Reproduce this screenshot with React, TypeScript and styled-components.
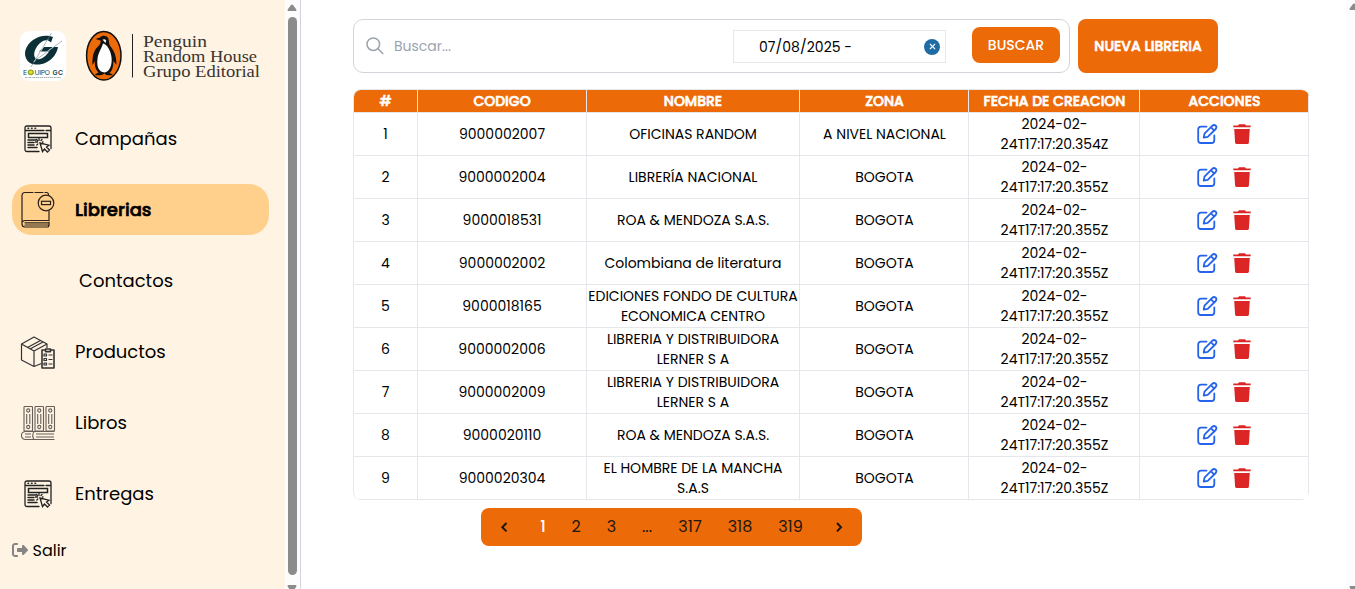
import React from "react";
import styled, { createGlobalStyle, css } from "styled-components";
import { FaRightFromBracket, FaXmark } from "react-icons/fa6";

const GlobalStyle = createGlobalStyle`
  * { box-sizing: border-box; }
  html, body { margin: 0; height: 100%; overflow: hidden; background: #fff; }
  body { font-family: Poppins, Inter, "Open Sans", sans-serif; color: #000; }
  #root { height: 100%; }
  button { font: inherit; border: 0; padding: 0; }
  svg { flex: none; }
`;

const heavy = css`font-weight: 500; -webkit-text-stroke: 0.65px currentColor;`;

const Page = styled.div`display: flex; width: 1355px; height: 589px; overflow: hidden;`;

const Sidebar = styled.aside`
  width: 285px; flex: none; background: #fff3e3; padding: 30px 16px 0 12px;
  display: flex; flex-direction: column;
`;
const Brand = styled.div`display: flex; align-items: flex-start; gap: 18px; height: 53px; padding-left: 7px;`;
const Menu = styled.nav`display: flex; flex-direction: column; gap: 20px; margin-top: 30px;`;
const MenuItem = styled.a<{ $active?: boolean }>`
  display: flex; align-items: center; height: 51px; border-radius: 20px; padding-left: 6px; font-size: 18px;
  ${p => p.$active && css`background: #ffd08c; ${heavy}`}
`;
const MenuIcon = styled.span`display: flex; width: 39px; justify-content: center; margin: 0 18px 0 0;`;
const SubItem = styled(MenuItem)`padding-left: 67px;`;
const Logout = styled.a`
  display: flex; align-items: center; gap: 4.5px; margin-top: 19px; height: 24px; font-size: 16px;
  svg { color: #858585; }
`;

const Scrollbar = styled.div`
  width: 15px; flex: none; background: #fcfcfc; display: flex; flex-direction: column; align-items: center;
  padding: 4px 1px 0 0; height: 589px; overflow: hidden;
`;
const Thumb = styled.div`width: 9px; height: 558px; margin: 5px 0 10px; flex: none; border-radius: 5px; background: #8b8b8b;`;
const Main = styled.main`flex: 1; border-left: 1px solid #d1d5db; padding: 19px 0 0 52px; min-width: 0;`;
const PageScroll = styled.div`
  width: 9px; flex: none; background: #fcfcfc; display: flex; flex-direction: column; justify-content: space-between;
  height: 594px; padding: 3px 0 0 3px; overflow: hidden;
`;

const Toolbar = styled.div`display: flex; gap: 8px; height: 54px;`;
const SearchBox = styled.div`
  display: flex; align-items: center; width: 717px; border: 1px solid #d1d5db; border-radius: 10px; padding: 0 9px 0 12px;
`;
const Placeholder = styled.span`flex: 1; margin-left: 8px; font-size: 14px; color: #9ca3af;`;
const DateField = styled.div`
  display: flex; align-items: center; justify-content: space-between; width: 213px; height: 33px; margin-right: 26px;
  border: 1px solid #e5e7eb; padding: 1px 5px 0 25px; font-size: 14px; line-height: 20px;
`;
const DateText = styled.span`padding-top: 1px; letter-spacing: 0.05px;`;
const Clear = styled.span`
  display: flex; align-items: center; justify-content: center; width: 16px; height: 16px; border-radius: 50%;
  background: #216ba5; color: #fff;
`;
const SearchButton = styled.button`
  width: 88px; height: 36px; margin-bottom: 2px; border-radius: 8px; background: #ed6a09; color: #fff; font-size: 14px; font-weight: 500;
`;
const NewButton = styled.button`
  width: 140px; height: 54px; border-radius: 8px; background: #ed6a09; color: #fff; font-size: 14px; ${heavy}
`;

const Table = styled.div`
  width: 956px; margin-top: 16px; border: 1px solid #e5e7eb; border-right: 0; border-bottom: 0; border-radius: 8px; overflow: hidden;
`;
const Row = styled.div<{ $head?: boolean }>`
  display: grid; grid-template-columns: 64px 169px 213px 169px 171px 169px;
  height: ${p => (p.$head ? 23 : 43)}px;
  ${p => p.$head && css`background: #ed6a09; color: #fff; ${heavy}`}
`;
const Cell = styled.div`
  display: flex; align-items: center; justify-content: center; text-align: center;
  border-right: 1px solid #e5e7eb; border-bottom: 1px solid #e5e7eb;
  font-size: 14px; line-height: 20px; white-space: pre-line;
  &:nth-child(n + 4) { padding-left: 1px; }
`;
const Actions = styled(Cell)`
  gap: 15px;
  &&:nth-child(n + 4) { padding: 0 1px 1px 0; }
`;

const Pager = styled.div`
  display: flex; align-items: center; width: 381px; height: 38px; margin: 8px 0 0 128px; padding-bottom: 1px;
  border-radius: 8px; background: #ed6a09; font-size: 16px; color: #1b1712;
`;
const PageLink = styled.span<{ $w: number; $current?: boolean }>`
  display: flex; justify-content: center; width: ${p => p.$w}px;
  ${p => p.$current && "color: #fff; font-weight: 500;"}
`;

const Triangle = ({ down = false }: { down?: boolean }) => (
  <svg width="10" height="8" viewBox="0 0 10 8">
    <path d={down ? "M1 0h8q1 1 0 2L6 7q-1 1-2 0L1 2Q0 1 1 0Z" : "M1 7h8q1-1 0-2L6 1Q5 0 4 1L1 5Q0 6 1 7Z"} fill="#8b8b8b" />
  </svg>
);

const EquipoLogo = () => (
  <svg width="48" height="52" viewBox="0 0 48 52">
    <rect x="1" y="1" width="46" height="50" rx="9" fill="#fff" />
    <path d="M34 7C28 4.500 20 5.500 14 10C6 16 4 24 8 30C11 35.500 21 36 28 32C34 29 38 23 39 17H25L20 21.500H30C27 26 22 30.500 18 29C13.500 27.500 14.500 20 20 14C24 10 28 8.700 32 12.500Z" fill="#0b3038" />
    <path d="M15 32L29 9.500M19 28.500L37 15" stroke="#fff" strokeWidth="1" />
    <path d="M12 37L32.500 3M18 29L43 11" stroke="#6f8589" strokeWidth=".6" />
    <g fontFamily="Inter, sans-serif" fontSize="6.800" fill="#17424b">
      <text x="4" y="44.800">E</text>
      <text x="15.500" y="44.800" textLength="15.500">UIPO</text>
      <text x="33.500" y="44.800" fontWeight="600" textLength="10.500">GC</text>
    </g>
    <ellipse cx="11.800" cy="42.300" rx="2.500" ry="2.300" fill="#dfe02c" stroke="#8ba41c" strokeWidth="1.200" />
    <path d="M6 47.500h36" stroke="#a3aeb0" strokeWidth="1.200" strokeDasharray="2 .6 1 .5" />
  </svg>
);

const PenguinLogo = () => (
  <svg width="180" height="53" viewBox="0 0 180 53">
    <ellipse cx="18.800" cy="25.700" rx="17.200" ry="24.300" fill="#ed6a09" stroke="#111" strokeWidth="1.500" />
    <path d="M15 7.500C17 4.800 22 5 23.300 8.500C24.500 12 23.500 14 26 17C30 22 31.500 28 31.500 35L28.500 31C28.500 37 27 41 24.500 43L28 44.500C25 46 21 45.500 19.500 43.500C17 45.500 12 46 10 44.500L13.500 42.500C10.500 39 9.500 36 10 31L7.500 35C7 27 8.500 20 13.500 16C15.500 14 16 12 15.500 10.500L10.500 9Z" fill="#111" />
    <path d="M18 13.500C22 14.500 25.500 20 26.500 27C27.500 35 24.500 42 19.500 42.500C13.500 42 11.500 36 12.500 29C13.200 22.500 16 20 18 13.500Z" fill="#fff" />
    <path d="M17.500 9.800q2-1.600 3.700.8l-.9 2.600q-1-2-2.800-3.400Z" fill="#fff" />
    <path d="M47.500 4v43.500" stroke="#222" strokeWidth="1" />
    <g fontFamily="Liberation Serif, serif" fontSize="17" fill="#383430">
      <text x="58" y="16.500" textLength="64" lengthAdjust="spacingAndGlyphs">Penguin</text>
      <text x="58" y="31.800" textLength="114" lengthAdjust="spacingAndGlyphs">Random House</text>
      <text x="58" y="47" textLength="117" lengthAdjust="spacingAndGlyphs">Grupo Editorial</text>
    </g>
  </svg>
);

const CampaignIcon = () => (
  <svg width="28" height="28" viewBox="0 0 28 28" fill="none" stroke="#222" strokeWidth="1.300" strokeLinecap="round">
    <path d="M15 26.500H3Q1 26.500 1 24.500V3Q1 1 3 1H25Q27 1 27 3V23.500M1 5.500H20M22 5.500H27" />
    <path d="M4 3.300h.6M7.500 3.300h.6M11 3.300h.6" strokeWidth="1.500" />
    <path d="M4.500 8.500h19v4h-19zM4 15h8M4 17.500h6M4 20h6M4 22.500h9" strokeWidth="1.500" />
    <path d="M16 18l2.500 8.500 2-2.500 3 3 2-2-3-3 2.500-1.800ZM15 13.500v2M11.500 17h2M12.500 14.500l1 1M18 14.500l-1 1M12.800 20l1-1M18.500 17h.5" />
  </svg>
);
const BookIcon = () => (
  <svg width="36" height="38" viewBox="0 0 36 38" fill="none" stroke="#2b2118" strokeWidth="1.200" strokeLinecap="round">
    <path d="M13 1.500H5Q2 1.500 2 5V33Q2 36 5 36H28Q29.500 35 29 31M15 1.500h8M25 1.500h2q1.500.5 1.500 2M29 20v9.500M2 31.500Q3 29.500 5 29.500H29M5 31.800H28M5 34H28" />
    <circle cx="26" cy="12" r="7.800" /><rect x="21.500" y="10.300" width="9" height="3.300" />
  </svg>
);
const ProductIcon = () => (
  <svg width="36" height="34" viewBox="0 0 36 34" fill="none" stroke="#333" strokeWidth="1.200" strokeLinejoin="round">
    <path d="M21.500 28.500L14 31.500L1.500 25V9L14 2L27 9V13M1.500 9L14 16L27 9M14 16V31.500M7.500 12.500L20.500 5.500M10 14L23 7" />
    <path d="M25.500 15h-3.500v18h12V15H30.500M25.500 14h5v2.600h-5z" strokeWidth="1.600" />
    <path d="M24 19h2.500v2h-2.500zM24 23.500h2.500v2h-2.500zM24 28h2.500v2h-2.500zM28.500 20h4M28.500 24.500h4M28.500 29h4" />
  </svg>
);
const BooksIcon = () => (
  <svg width="36" height="36" viewBox="0 0 36 36" fill="none" stroke="#665f57" strokeWidth="1.100">
    {[4, 15, 26].map(x => (
      <g key={x}>
        <rect x={x} y="1.500" width="8.500" height="24.500" rx=".8" />
        <circle cx={x + 4.25} cy="5.500" r="1.600" /><circle cx={x + 4.25} cy="22" r="1.600" />
        <path d={`M${x + 2.7} 9v10M${x + 5.8} 9v10`} />
      </g>
    ))}
    <path d="M34.500 26.500H5Q1.500 27 1.500 30.500Q1.500 34 5 34.500H34.500M14 26.500Q11.500 30.500 14 34.500M5 29h6M5 32h6M16 29h18M16 32h18" />
  </svg>
);
const SearchIcon = () => (
  <svg width="20" height="20" viewBox="0 0 20 20" fill="none" stroke="#9ca3af" strokeWidth="1.500" strokeLinecap="round">
    <circle cx="7.300" cy="8.200" r="6.300" /><path d="M12 12.700L16.800 17.500" />
  </svg>
);
const EditIcon = () => (
  <svg width="22" height="22" viewBox="0 0 22 22" fill="none" stroke="#2563eb" strokeWidth="1.800" strokeLinecap="round" strokeLinejoin="round">
    <path d="M10.500 3.600H5Q2.200 3.600 2.200 6.400V17.200Q2.200 20 5 20H15.500Q18.300 20 18.300 17.200V12.500" />
    <path d="M7.700 14.600L8.500 10.700L16.400 2.700Q18 1.300 19.700 2.700Q21.100 4.300 19.700 6L11.700 13.900ZM15 4.300L18.100 7.400" />
  </svg>
);
const TrashIcon = () => (
  <svg width="18" height="20" viewBox="0 0 18 20" fill="#dc2626">
    <path d="M.3 1.500H5L6 .2H12L13 1.500H17.700V3.300H.3ZM1.200 5H16.800L15.900 18.500Q15.800 20 14.300 20H3.700Q2.200 20 2.100 18.500Z" />
  </svg>
);
const Chevron = ({ right = false }: { right?: boolean }) => (
  <svg width="8" height="24" viewBox="0 -7 8 24" fill="none" stroke="#1b1712" strokeWidth="2">
    <path d={right ? "M2 1L6 5.200L2 9.400" : "M6.500 1L2.300 5.200L6.500 9.400"} />
  </svg>
);

type Store = [string, string, string];
const rows: Store[] = [
  ["9000002007", "OFICINAS RANDOM", "A NIVEL NACIONAL"],
  ["9000002004", "LIBRERÍA NACIONAL", "BOGOTA"],
  ["9000018531", "ROA & MENDOZA S.A.S.", "BOGOTA"],
  ["9000002002", "Colombiana de literatura", "BOGOTA"],
  ["9000018165", "EDICIONES FONDO DE CULTURA\nECONOMICA CENTRO", "BOGOTA"],
  ["9000002006", "LIBRERIA Y DISTRIBUIDORA\nLERNER S A", "BOGOTA"],
  ["9000002009", "LIBRERIA Y DISTRIBUIDORA\nLERNER S A", "BOGOTA"],
  ["9000020110", "ROA & MENDOZA S.A.S.", "BOGOTA"],
  ["9000020304", "EL HOMBRE DE LA MANCHA\nS.A.S", "BOGOTA"],
];
const headings = ["#", "CODIGO", "NOMBRE", "ZONA", "FECHA DE CREACION", "ACCIONES"];

export default function App() {
  return (
    <Page>
      <GlobalStyle />
      <Sidebar>
        <Brand><EquipoLogo /><PenguinLogo /></Brand>
        <Menu>
          <MenuItem><MenuIcon><CampaignIcon /></MenuIcon>Campañas</MenuItem>
          <MenuItem $active><MenuIcon><BookIcon /></MenuIcon>Librerias</MenuItem>
          <SubItem>Contactos</SubItem>
          <MenuItem><MenuIcon><ProductIcon /></MenuIcon>Productos</MenuItem>
          <MenuItem><MenuIcon><BooksIcon /></MenuIcon>Libros</MenuItem>
          <MenuItem><MenuIcon><CampaignIcon /></MenuIcon>Entregas</MenuItem>
        </Menu>
        <Logout><FaRightFromBracket size={16} />Salir</Logout>
      </Sidebar>
      <Scrollbar><Triangle /><Thumb /><Triangle down /></Scrollbar>
      <Main>
        <Toolbar>
          <SearchBox>
            <SearchIcon />
            <Placeholder>Buscar...</Placeholder>
            <DateField><DateText>07/08/2025 -</DateText><Clear><FaXmark size={9} /></Clear></DateField>
            <SearchButton>BUSCAR</SearchButton>
          </SearchBox>
          <NewButton>NUEVA LIBRERIA</NewButton>
        </Toolbar>
        <Table>
          <Row $head>{headings.map(h => <Cell key={h}>{h}</Cell>)}</Row>
          {rows.map(([code, name, zone], i) => (
            <Row key={code}>
              <Cell>{i + 1}</Cell>
              <Cell>{code}</Cell>
              <Cell>{name}</Cell>
              <Cell>{zone}</Cell>
              <Cell>{`2024-02-\n24T17:17:20.35${i === 0 ? 4 : 5}Z`}</Cell>
              <Actions><EditIcon /><TrashIcon /></Actions>
            </Row>
          ))}
        </Table>
        <Pager>
          <PageLink $w={46}><Chevron /></PageLink>
          <PageLink $w={32} $current>1</PageLink>
          <PageLink $w={34}>2</PageLink>
          <PageLink $w={37}>3</PageLink>
          <PageLink $w={34}>...</PageLink>
          <PageLink $w={52}>317</PageLink>
          <PageLink $w={48}>318</PageLink>
          <PageLink $w={53}>319</PageLink>
          <PageLink $w={43}><Chevron right /></PageLink>
        </Pager>
      </Main>
      <PageScroll><Triangle /><Triangle down /></PageScroll>
    </Page>
  );
}
